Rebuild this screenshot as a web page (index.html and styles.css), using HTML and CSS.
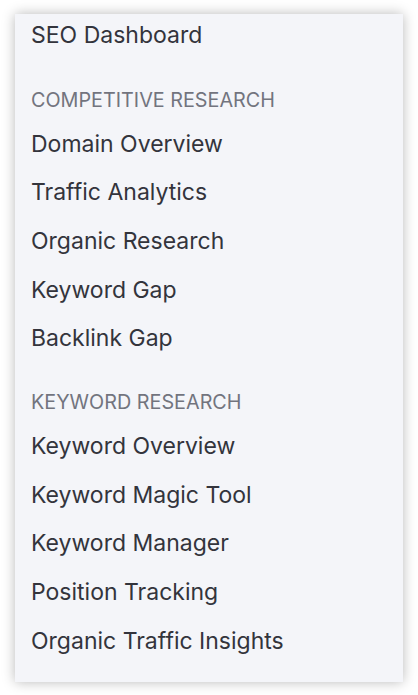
FILE: index.html
```html
<!DOCTYPE html>
<html>
<head>
<meta charset="utf-8">
<link rel="stylesheet" href="styles.css">
</head>
<body>
<nav class="panel">
  <a class="item first">SEO Dashboard</a>
  <div class="heading">COMPETITIVE RESEARCH</div>
  <a class="item">Domain Overview</a>
  <a class="item">Traffic Analytics</a>
  <a class="item">Organic Research</a>
  <a class="item">Keyword Gap</a>
  <a class="item">Backlink Gap</a>
  <div class="heading">KEYWORD RESEARCH</div>
  <a class="item">Keyword Overview</a>
  <a class="item">Keyword Magic Tool</a>
  <a class="item">Keyword Manager</a>
  <a class="item">Position Tracking</a>
  <a class="item">Organic Traffic Insights</a>
</nav>
</body>
</html>
```
FILE: styles.css
```css
html, body {
  margin: 0;
  padding: 0;
  background: #ffffff;
}
body {
  font-family: Inter, "Noto Sans", sans-serif;
  width: 418px;
  height: 695px;
  overflow: hidden;
}
.panel {
  margin: 14px 15px 0 15px;
  width: 388px;
  height: 668px;
  box-sizing: border-box;
  background: #f4f5f9;
  box-shadow: 0 0 12px rgba(0, 0, 0, 0.28);
  display: flex;
  flex-direction: column;
  padding: 0 16px;
}
.item {
  display: flex;
  align-items: center;
  height: 48.6px;
  font-size: 23px;
  color: #33343c;
  flex-shrink: 0;
}
.item.first {
  height: 42px;
  padding-bottom: 4px;
}
.heading {
  flex-shrink: 0;
  padding-top: 29.5px;
  padding-bottom: 9px;
  line-height: 21px;
  font-size: 19.8px;
  color: #72747e;
}
```
